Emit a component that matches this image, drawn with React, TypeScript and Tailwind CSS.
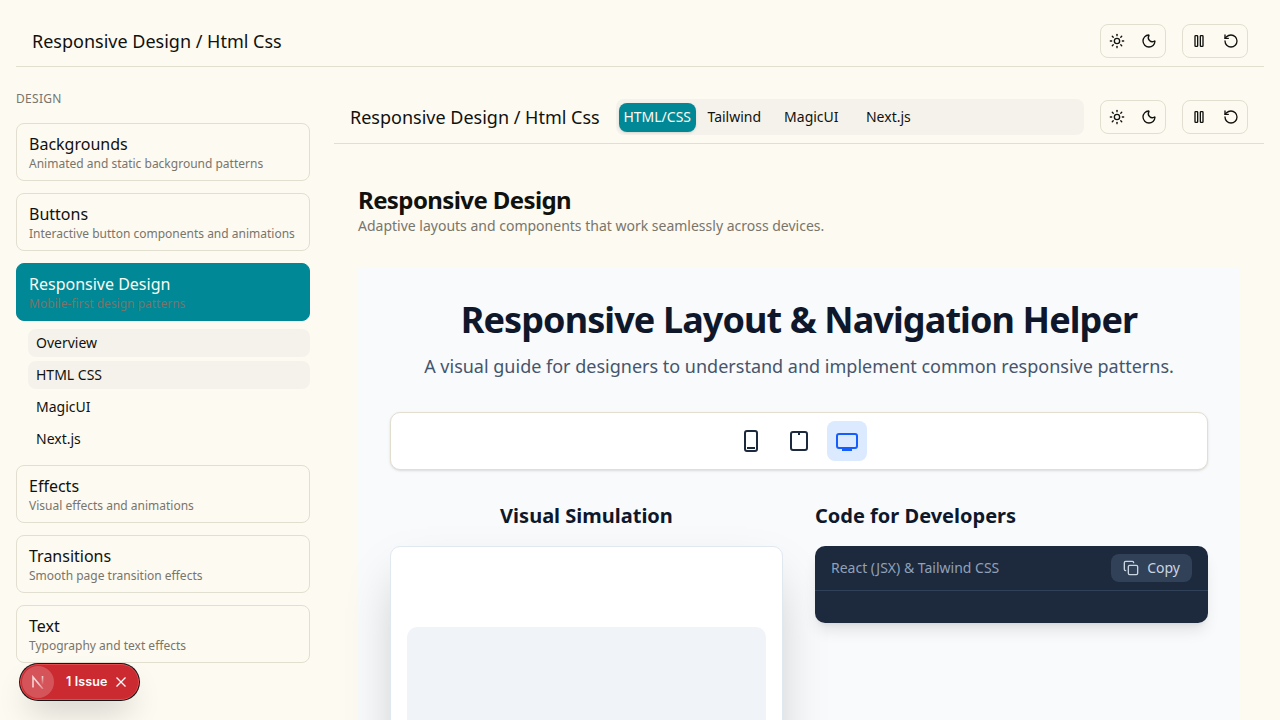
import { Copy, Moon, RotateCcw, Sun } from 'lucide-react';

function PauseBars() {
  return (
    <svg width="16" height="16" viewBox="0 0 24 24" fill="none" stroke="currentColor" strokeWidth="2" strokeLinecap="round" strokeLinejoin="round">
      <rect x="14" y="4" width="4" height="16" rx="1" />
      <rect x="6" y="4" width="4" height="16" rx="1" />
    </svg>
  );
}

function Controls() {
  return (
    <div className="flex shrink-0 gap-4">
      <div className="flex h-[34px] w-[66px] items-center justify-around rounded-lg border border-[#e2dfd0]">
        <button><Sun size={16} /></button>
        <button><Moon size={16} /></button>
      </div>
      <div className="flex h-[34px] w-[66px] items-center justify-around rounded-lg border border-[#e2dfd0]">
        <button><PauseBars /></button>
        <button><RotateCcw size={16} /></button>
      </div>
    </div>
  );
}

type Category = { title: string; text: string; active?: boolean };

function CategoryCard({ title, text, active }: Category) {
  return (
    <div className={active ? 'rounded-lg border border-[#008896] bg-[#008896] px-3 py-2 text-[#fdfaf2]' : 'rounded-lg border border-[#e2dfd0] px-3 py-2'}>
      <div className="text-base">{title}</div>
      <div className="whitespace-nowrap text-xs text-[#78756a]">{text}</div>
    </div>
  );
}

const links = [
  { label: 'Overview', shaded: true },
  { label: 'HTML CSS', shaded: true },
  { label: 'MagicUI', shaded: false },
  { label: 'Next.js', shaded: false },
];

function Sidebar() {
  return (
    <aside className="w-[294px] shrink-0">
      <div className="mb-4 text-xs tracking-wide text-[#78756a]">DESIGN</div>
      <div className="flex flex-col gap-3">
        <CategoryCard title="Backgrounds" text="Animated and static background patterns" />
        <CategoryCard title="Buttons" text="Interactive button components and animations" />
        <div>
          <CategoryCard title="Responsive Design" text="Mobile-first design patterns" active />
          <div className="mt-2 ml-3 flex flex-col gap-1">
            {links.map((l) => (
              <div key={l.label} className={l.shaded ? 'rounded-lg bg-[#f5f2eb] px-2 py-1 text-sm' : 'px-2 py-1 text-sm'}>
                {l.label}
              </div>
            ))}
          </div>
        </div>
        <CategoryCard title="Effects" text="Visual effects and animations" />
        <CategoryCard title="Transitions" text="Smooth page transition effects" />
        <CategoryCard title="Text" text="Typography and text effects" />
      </div>
    </aside>
  );
}

function DeviceToolbar() {
  return (
    <div className="mt-8 flex justify-center gap-2 rounded-[10px] border border-[#e2dfd0] bg-white p-2 text-slate-800 shadow-sm">
      <button className="flex size-10 items-center justify-center">
        <svg width="24" height="24" viewBox="0 0 24 24" fill="none" stroke="currentColor" strokeWidth="2">
          <rect x="6" y="2" width="12" height="20" rx="2" />
          <path d="M8 19h8" />
        </svg>
      </button>
      <button className="flex size-10 items-center justify-center">
        <svg width="24" height="24" viewBox="0 0 24 24" fill="none" stroke="currentColor" strokeWidth="2">
          <rect x="4" y="3" width="16" height="18" rx="2" />
          <path d="M12 4v2" />
        </svg>
      </button>
      <button className="flex size-10 items-center justify-center rounded-lg bg-blue-100 text-[#155dfc]">
        <svg width="24" height="24" viewBox="0 0 24 24" fill="none" stroke="currentColor" strokeWidth="2">
          <rect x="2" y="5" width="20" height="14" rx="2" />
          <path d="M7 21h10" />
        </svg>
      </button>
    </div>
  );
}

function IssueBadge() {
  return (
    <div className="absolute top-[664px] left-5 flex h-9 w-[119px] items-center rounded-full border border-[#e5484d] bg-[#ca2a30] font-['Inter',sans-serif] text-white shadow-[0_0_0_1px_#171717,0_16px_32px_-8px_rgba(0,0,0,0.24)]">
      <div className="ml-px flex size-8 shrink-0 items-center justify-center rounded-full bg-white/20">
        <svg width="14" height="14" viewBox="0 0 14 14" fill="none" strokeWidth="1.6">
          <defs>
            <linearGradient id="diag" gradientUnits="userSpaceOnUse" x1="7" y1="8" x2="12" y2="14">
              <stop stopColor="#fff" stopOpacity="0.75" />
              <stop offset="1" stopColor="#fff" stopOpacity="0.25" />
            </linearGradient>
            <linearGradient id="bar" gradientUnits="userSpaceOnUse" x1="11" y1="1" x2="11" y2="10">
              <stop stopColor="#fff" stopOpacity="0.75" />
              <stop offset="1" stopColor="#fff" stopOpacity="0" />
            </linearGradient>
          </defs>
          <path stroke="url(#diag)" d="M2 12.5V2L12 14" />
          <path stroke="url(#bar)" d="M11.5 1v9" />
        </svg>
      </div>
      <span className="ml-3 w-[41px] shrink-0 whitespace-nowrap text-[12.5px] font-semibold tracking-[0.1px]">1 Issue</span>
      <svg className="ml-[8px] shrink-0" width="12" height="12" viewBox="0 0 12 12" stroke="white" strokeWidth="1.3">
        <path d="M1.5 1.5l9 9M10.5 1.5l-9 9" />
      </svg>
    </div>
  );
}

export default function App() {
  return (
    <div className="relative h-[720px] w-[1280px] overflow-hidden bg-[#fdfaf2] p-4 font-['Noto_Sans',sans-serif] text-[#11110d]">
      <header className="flex items-center justify-between border-b border-[#e2dfd0] px-4 py-2">
        <h1 className="text-lg">Responsive Design / Html Css</h1>
        <Controls />
      </header>
      <div className="mt-6 flex gap-6">
        <Sidebar />
        <main className="w-[930px] shrink-0">
          <header className="flex items-center gap-4 border-b border-[#e2dfd0] px-4 py-2">
            <h2 className="whitespace-nowrap text-lg">Responsive Design / Html Css</h2>
            <div className="grid h-9 flex-1 grid-cols-6 rounded-lg bg-[#f5f2eb] p-[3px] text-center text-sm leading-7">
              <div className="mt-px rounded-lg bg-[#008896] text-[#fdfaf2] shadow-sm">HTML/CSS</div>
              <div className="mt-px">Tailwind</div>
              <div className="mt-px">MagicUI</div>
              <div className="mt-px">Next.js</div>
            </div>
            <Controls />
          </header>
          <div className="px-6 pt-10">
            <h2 className="text-2xl font-bold tracking-tight">Responsive Design</h2>
            <p className="text-sm text-[#78756a]">Adaptive layouts and components that work seamlessly across devices.</p>
            <section className="mt-8 h-[700px] bg-slate-50 p-8 text-slate-900">
              <h1 className="text-center text-4xl font-bold tracking-tight">Responsive Layout &amp; Navigation Helper</h1>
              <p className="mt-3 text-center text-lg leading-7 text-slate-600">
                A visual guide for designers to understand and implement common responsive patterns.
              </p>
              <DeviceToolbar />
              <div className="mt-8 grid grid-cols-2 gap-8">
                <div>
                  <h3 className="mb-4 text-center text-xl font-bold">Visual Simulation</h3>
                  <div className="h-[600px] rounded-[10px] border border-slate-200 bg-white px-4 pt-20 shadow-2xl">
                    <div className="h-[400px] rounded-[10px] bg-[#f0f4f9]" />
                  </div>
                </div>
                <div>
                  <h3 className="mb-4 text-xl font-bold">Code for Developers</h3>
                  <div className="h-[77px] rounded-[10px] bg-slate-800 shadow-lg">
                    <div className="flex items-center justify-between border-b border-slate-700 px-4 py-2 text-sm">
                      <span className="text-slate-400">React (JSX) &amp; Tailwind CSS</span>
                      <button className="flex h-7 items-center gap-2 rounded-lg bg-slate-700 px-3 text-slate-300">
                        <Copy size={16} />
                        Copy
                      </button>
                    </div>
                  </div>
                </div>
              </div>
            </section>
          </div>
        </main>
      </div>
      <IssueBadge />
    </div>
  );
}
